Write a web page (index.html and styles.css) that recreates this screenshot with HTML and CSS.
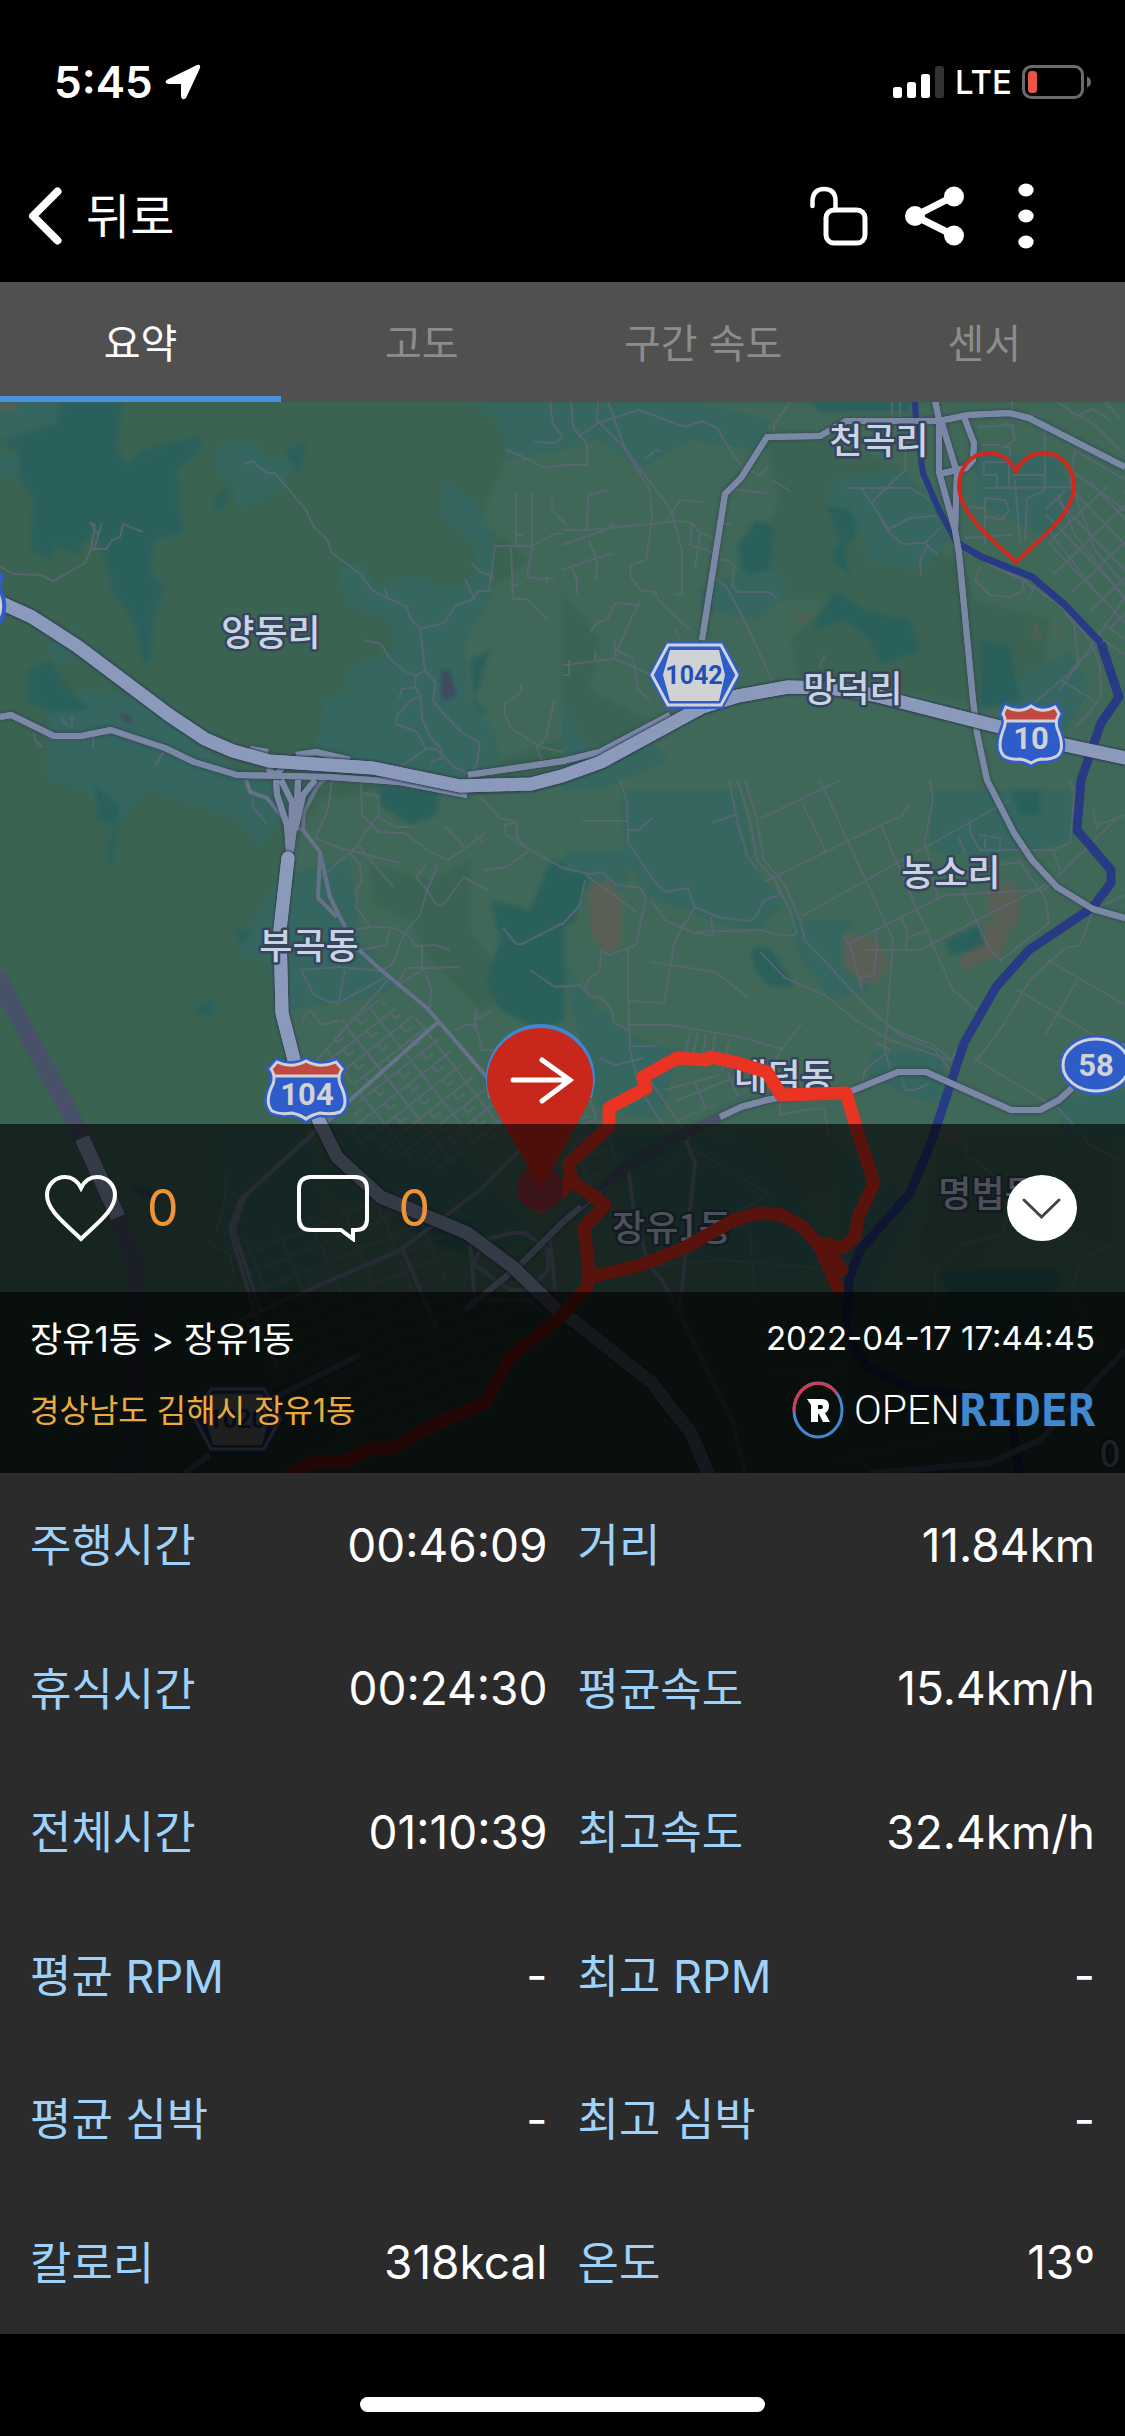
FILE: index.html
```html
<!DOCTYPE html>
<html lang="ko">
<head>
    <meta charset="UTF-8">
    <meta name="viewport" content="width=device-width, initial-scale=1.0">
    <title>OPENRIDER</title>
    <link rel="stylesheet" href="styles.css">
</head>
<body>

    <!-- Status bar -->
    <div class="status-bar">
        <div class="status-left">
            <span class="clock">5:45</span>
            <svg width="36" height="36" viewBox="0 0 36 36" aria-hidden="true">
                <path d="M2.5 15.500 L32 1 Q36 0 35 4 L21.5 33 Q20 36 17.5 35 Q16 34 16 32 V20 H4 Q1 20 0.5 18 Q0.5 16.5 2.5 15.5Z" fill="#fff"/>
            </svg>
        </div>
        <div class="status-right">
            <svg width="52" height="34" viewBox="0 0 52 34" aria-hidden="true">
                <rect x="0" y="22" width="9" height="11" rx="2.5" fill="#fff"/>
                <rect x="14" y="17" width="9" height="16" rx="2.5" fill="#fff"/>
                <rect x="28" y="9" width="9" height="24" rx="2.5" fill="#fff"/>
                <rect x="42" y="1" width="9" height="32" rx="2.5" fill="#333"/>
            </svg>
            <span class="network">LTE</span>
            <svg width="70" height="34" viewBox="0 0 70 34" aria-hidden="true">
                <rect x="1.5" y="1.5" width="59" height="31" rx="8" fill="none" stroke="#6b6b6b" stroke-width="3"/>
                <rect x="6" y="6" width="9" height="22" rx="3.5" fill="#ec5545"/>
                <path d="M65 11.5 Q69 13 69 17 T65 22.5Z" fill="#6b6b6b"/>
            </svg>
        </div>
    </div>

    <!-- Header -->
    <header class="header">
        <button class="back-button" type="button">
            <svg width="34" height="58" viewBox="0 0 34 58" aria-hidden="true">
                <path d="M29.5 4.5 L5 29 L29.5 53.5" fill="none" stroke="#fff" stroke-width="8" stroke-linecap="round" stroke-linejoin="round"/>
            </svg>
            <span>뒤로</span>
        </button>
        <div class="header-actions">
            <button type="button" aria-label="잠금 해제">
                <svg width="58" height="60" viewBox="0 0 58 60">
                    <path d="M2.5 20 V15 Q3 3 14 3 Q25.5 3 25.5 15 V24" fill="none" stroke="#fff" stroke-width="4.5" stroke-linecap="round"/>
                    <rect x="16" y="24" width="39" height="33" rx="8" fill="none" stroke="#fff" stroke-width="5"/>
                </svg>
            </button>
            <button type="button" aria-label="공유">
                <svg width="60" height="60" viewBox="0 0 60 60">
                    <path d="M49 10 L10 30 L49 49.5" fill="none" stroke="#fff" stroke-width="7"/>
                    <circle cx="49" cy="10.5" r="10" fill="#fff"/>
                    <circle cx="10" cy="30" r="10" fill="#fff"/>
                    <circle cx="49" cy="49.5" r="10" fill="#fff"/>
                </svg>
            </button>
            <button type="button" aria-label="더보기">
                <svg width="16" height="66" viewBox="0 0 16 66">
                    <ellipse cx="8" cy="7" rx="7.7" ry="6.5" fill="#fff"/>
                    <ellipse cx="8" cy="33" rx="7.7" ry="6.5" fill="#fff"/>
                    <ellipse cx="8" cy="59" rx="7.7" ry="6.5" fill="#fff"/>
                </svg>
            </button>
        </div>
    </header>

    <!-- Tabs -->
    <nav class="tabs">
        <button class="tab active" type="button">요약</button>
        <button class="tab" type="button">고도</button>
        <button class="tab" type="button">구간 속도</button>
        <button class="tab" type="button">센서</button>
    </nav>

    <!-- Map with the ride on it -->
    <section class="map-section">
        <svg class="map" viewBox="0 402 1125 1071" role="img" aria-label="주행 경로 지도">
            <defs>
                <filter id="soft" x="-5%" y="-5%" width="110%" height="110%"><feGaussianBlur stdDeviation="2"/></filter>
                <pattern id="blocks-east" width="26" height="18" patternUnits="userSpaceOnUse" patternTransform="rotate(46)">
                    <path d="M0 1H26M1 0V18" class="street"/>
                </pattern>
                <pattern id="blocks-west" width="30" height="17" patternUnits="userSpaceOnUse" patternTransform="rotate(-38)">
                    <path d="M0 1H30M1 0V17M14 1V9H22" class="street"/>
                </pattern>
                <pattern id="blocks-south" width="34" height="19" patternUnits="userSpaceOnUse" patternTransform="rotate(-22)">
                    <path d="M0 1H34M1 0V19" class="street"/>
                </pattern>
            </defs>

            <!-- land cover -->
            <rect x="0" y="402" width="1125" height="1071" fill="#3a6352"/>
            <g filter="url(#soft)">
                <path class="plain" d="M530 402H1130V1480H300L310 1180 300 1060 285 1010 300 960 290 850 320 800 380 790 470 795 540 790 600 765 560 740 500 760 440 720 430 650 480 600 530 560 480 520 500 470Z"/>
                <path class="hill" d="M765 437 830 440 905 470 900 540 960 560 975 600 1010 610 1050 620 1040 700 1000 710 900 690 800 680 790 640 830 600 770 600 750 560 780 500Z"/>
                <path class="hill" d="M562 590 600 640 590 690 650 720 600 760 562 740Z"/>
                <path class="hill" d="M370 865 430 880 470 860 470 930 520 1000 480 1010 430 960 410 920 375 905Z"/>
                <path class="hill" d="M740 1125H830L850 1180 800 1200 740 1180ZM940 1140H1110V1240L1010 1220 960 1290 920 1250Z"/>

                <path class="field" d="M0 402H57V423L0 441ZM0 450 30 460 20 475 0 478Z"/>
                <path class="field" d="M215 447 255 440 268 460 295 455 285 485 262 500 240 510 230 480 215 470Z"/>
                <path class="field" d="M338 565H365L375 585 415 575 450 590 480 570 475 545 440 515 445 480 475 500 495 540 490 600 465 640 470 700 495 730 500 765 460 780 320 770 316 745 325 700 350 690 345 670 395 650 390 620 345 605Z"/>
                <path class="field" d="M470 402H562V450L510 460 500 425Z"/>
                <path class="field" d="M50 705 90 690 150 700 200 745 240 775 300 790 260 850 240 820 180 800 150 790 110 830 85 790 45 780Z"/>
                <path class="field" d="M45 650 75 625 80 650 60 665ZM270 890 300 870 350 860 360 940 400 985 360 1000 290 1010 265 960 235 955Z"/>
                <path class="field" d="M560 402H700L770 420 760 450 690 440 640 470 600 440 562 450Z"/>
                <path class="field" d="M830 480 900 470 935 500 950 540 920 570 870 560 855 520 830 510Z"/>
                <path class="field" d="M975 450 1060 460 1075 500 1050 540 1010 520 975 500ZM700 590 765 560 790 590 760 620 700 610Z"/>
                <path class="field" d="M562 700 590 750 640 730 670 760 600 790 562 790ZM1000 690 1070 650 1090 690 1060 740 1010 730Z"/>
                <path class="field" d="M620 790 740 790 755 870 785 900 760 930 720 925 690 910 650 900 625 860ZM565 850 630 850 625 890 565 890Z"/>
                <path class="field" d="M930 790 1070 790 1075 840 1000 860 930 850ZM790 920 850 920 870 990 830 1000 800 960Z"/>
                <path class="field" d="M562 960 600 1010 640 1040 680 1050 660 1120 600 1110 580 1040ZM870 1050 940 1050 950 1110 870 1080ZM1060 1100 1130 1090V1140H1060Z"/>
                <path class="field" d="M320 1120 450 1140 540 1240 470 1260 420 1210 330 1200ZM600 1130 760 1140 830 1240 800 1280 640 1250Z"/>
                <path class="field" d="M220 1130 310 1130 330 1270 260 1300 220 1250ZM840 1150 920 1200 860 1320 840 1300Z"/>

                <path class="forest" d="M0 442 57 423 60 402H122L117 445 125 462 155 445 203 436 195 455 177 470 183 533 155 540 150 570 165 590 155 610 150 660 143 665 135 625 112 590 105 560 95 530 75 555 55 545 50 560 30 550 33 500 20 480 18 450Z"/>
                <path class="forest" d="M285 452 308 440 303 460 297 475ZM213 500 232 483 225 505 218 515ZM470 660 490 650 475 700 490 715 475 710Z"/>
                <path class="forest" d="M27 670 50 660 70 690 90 710 50 712 28 700ZM95 785 120 805 115 845 112 870 105 855 115 825 97 820Z"/>
                <path class="forest" d="M380 785 440 785 437 815 410 825 380 805ZM490 900 530 910 550 860 565 860V1020L540 1030 500 1010 485 980 500 940Z"/>
                <path class="forest" d="M825 505 850 510 857 530 845 550 850 575 830 560 840 540ZM738 545 755 520 775 525 770 570 750 575 740 570ZM835 590 865 610 910 620 920 650 880 665 870 640 845 620 810 630Z"/>
                <path class="forest" d="M980 640 1010 645 1020 700 980 710ZM810 402H910V412H820ZM1010 790 1040 790 1040 815 1020 815Z"/>
                <path class="forest" d="M562 870 590 875 575 920 562 930ZM752 950Q765 940 775 955L795 985Q790 990 768 985 750 970 752 950Z"/>
                <path class="forest" d="M945 940 980 925 985 950 950 955ZM390 1220 470 1220 490 1250 450 1250ZM940 1270H1060L1050 1340 960 1340Z"/>
                <path class="forest" d="M195 1005 215 1000 212 1015 198 1015ZM235 930 255 930 240 945Z"/>

                <path class="soil" d="M590 885 610 880 622 900 620 945 605 952 590 930ZM844 932 875 940 890 965 880 980 862 985 844 965ZM988 890 1010 882 1018 890 1018 925 1000 930 988 910ZM985 920 1010 930 1000 955 962 970 962 955 985 945Z"/>
                <path class="soil" d="M792 613 810 615 805 623ZM1035 618 1040 640 1034 638ZM1053 622 1060 628 1053 632ZM0 404 18 404 15 410 0 412ZM940 1130 960 1130 955 1145 940 1145Z"/>
                <path fill="#414a60" d="M441 671 449 670 456 690V697L442 700ZM119 715 129 714 133 722 130 725ZM126 1180 150 1190 165 1200 140 1197Z"/>
            </g>

            <!-- city blocks -->
            <path fill="url(#blocks-east)" d="M1045 505 1080 480 1125 490V640L1090 610 1050 570Z"/>
            <path fill="url(#blocks-west)" d="M378 1000 420 1020 478 1080 520 1130 440 1170 350 1140 360 1085 312 1070 340 1030Z"/>
            <path fill="url(#blocks-south)" d="M240 1240 400 1190 450 1240 440 1330 270 1390ZM570 1110 600 1120 620 1160 575 1200ZM670 1090 740 1070 740 1095 680 1120ZM330 1350 420 1300 540 1290 470 1400 400 1440 330 1460Z"/>

            <!-- small streets -->
            <g class="street">
                <path d="M0 566 13 574 41 575 53 581 85 563 91 549 106 549 112 540 120 537 123 524 143 532M91 549 95 525 90 522 98 535 102 523 94 549"/>
                <path d="M245 464 252 461 267 473H275L306 510 314 527 327 539 332 553 360 574 373 591 407 607 410 618 420 629 444 623 456 605 474 599 478 591H489L495 546H532L554 534 563 533M385 588 387 597M474 599 465 579M472 563 480 572 494 577M516 493V546M532 493V546L527 577 541 579 554 578M511 546 513 599 527 599 547 620M511 585H519M516 535H523M547 577V585"/>
                <path d="M420 629 425 670 436 683 433 700 440 710 461 732 480 743 477 765 468 775M425 670 416 676 415 687 421 697 422 718 431 738 441 748 442 755 454 767 468 774M364 640 381 644 391 660 406 672 416 676M415 687 402 689 399 698M421 697 411 700 397 716 396 724 417 732 426 749 400 767M426 749 436 749 444 757 430 763"/>
                <path d="M505 449 546 468 563 465M550 402 553 424 563 437 555 443 534 442M522 453 524 461M552 498V509L563 522M521 683V692L505 704V714L511 728 540 747 563 752M554 700 546 738 537 748 542 760"/>
                <path d="M34 732 35 740 43 748M93 735V749M166 748 155 766M61 718 68 726M72 716V728M56 740H80"/>
                <path d="M571 402 573 427 587 444V465L562 465M598 402 597 420 623 446 650 490 652 520 646 560 631 565 630 575 640 590 655 592 660 602 690 630M578 437 600 422 639 410 685 427 702 421 717 428 730 450 745 470M608 402 625 448 671 510 682 550V595L675 594M645 460 655 450 662 451M562 530 590 530 680 521 692 523 700 533 722 540M562 545 605 530 615 523M562 520 572 532M587 530 588 495 609 490M665 523 680 500 702 502M692 523 690 545 722 555M700 533 695 568M562 570 590 560 612 554M589 540 597 562 596 580M572 568 577 580V594"/>
                <path d="M712 575 727 588 746 624 772 680M712 559 727 560 734 566 732 585 738 592H769L777 598M772 480 790 491M730 489 767 493M745 468 760 475 768 466M773 437 774 425 790 402M715 524H731M640 605 615 603 607 620 597 622 590 633M640 600 617 650 633 659 638 690 650 700M562 665 615 659 650 674M595 650V659M614 640 616 658M675 630 680 640M562 675H569V660"/>
                <path d="M907 430 905 470 872 502 887 530 902 544 925 543 940 528M846 488 910 488 930 500M887 530 910 518 935 516M928 545 920 560 921 575M925 543 938 555M862 489 888 528M892 402V420H900V402M825 655 820 665 821 668"/>
                <path d="M980 567 975 580 990 595 1010 597 1024 590 1022 580 985 562M1023 578 1033 590 1028 600M1060 605 1074 624 1079 666 1061 680 1034 703M961 550 1000 565 1060 605 1090 640 1100 665 1101 695 1090 712 1075 727M1061 680 1098 703M982 488 1078 487M984 462H1009V486M984 462V475H997V488M985 498 1005 500 1009 510 1002 520 985 516ZM965 538 1012 535M1015 480 1020 545M1025 500 1045 490V430M1012 475H1045V488M1027 498 1025 540M978 427 1012 425 1015 440 1003 447H1010V456H1004M983 445H1000M985 500V545M965 507 985 508M1032 545 1048 530 1095 590M1058 494 1075 535 1125 600M1075 450 1070 480 1095 550 1125 585M1075 450 1125 480M1070 470 1125 510M1079 415 1095 425 1125 455M1058 402 1077 416 1092 409 1110 420M1012 402V412L1037 415M1105 402 1120 418"/>
                <path d="M1130 590 1060 690M1070 670 1103 640 1125 655M1103 622 1125 640"/>
                <path d="M620 780 627 803 628 842 657 885 667 892 688 888 695 907 718 917 750 921 757 915 764 900 780 895M695 907 675 940 664 1003 629 1001M582 821H627M628 830H638L653 818M562 868 590 874 602 872 617 885 640 888 646 897 636 945 628 950V985L630 1050 640 1090M586 875 638 913M636 945 610 955 601 951 600 970 588 980 585 990M562 987 580 985 590 996 602 998 612 1010 614 1023 628 1030M562 925 580 905 585 880M652 901 665 920 692 932 760 930 782 936 795 935M651 962 715 972 748 997M692 932 713 936M711 917 713 935M712 823 735 815"/>
                <path d="M729 780 737 820 747 855 757 870M737 780 750 820 757 860 775 880 790 910 797 935M745 780 757 820 764 860 785 885 800 920 805 940 870 1010 900 1035 935 1050 953 1074M757 820 841 780M764 882 881 825 901 817 910 803M802 916 1010 800M802 802 826 852M820 780 893 940 885 1050 893 1080M881 825 915 905 953 990 980 1013 951 1060 933 1045 895 1030 860 1000M962 890 990 950 1001 960 1049 923 1046 900 1020 862 960 870M850 943 945 895 1044 890 1120 815M866 950H920L1045 885M780 895 777 887 790 910M760 952 785 978 825 995 855 1020 890 1040 950 1060M844 937 850 945 862 990M875 930 877 945 874 975 860 978M900 915 907 930 906 950M908 937 930 930M930 780 933 800 925 842 938 900M970 820V832L980 850H1053L1070 843 1075 790 1068 780M978 835 1000 838V850M985 838V848M1053 850 1060 870M958 837 965 853"/>
                <path d="M1125 895 1093 910 1080 945 1065 948 1030 980 1000 1030 973 1065M1048 960 1125 1005M1016 989 1110 1045M1078 979 1045 1035M1098 825 1125 815M1093 808 1097 830M973 1058 1060 1110 1074 1125M875 1042 890 1050 865 1070 862 1085 900 1075M953 1074 945 1100M900 1072 905 1090H915L930 1083"/>
                <path d="M630 1025H671L740 1037 782 1049 802 1023M690 1033 685 1055M698 1033 693 1053M706 1034 703 1055M715 1035 712 1056M729 1041 722 1070M782 1049 775 1060M600 1058 615 1065 644 1058M632 1046 657 1046M780 1100V1115L805 1110 824 1108 830 1140M664 1090 720 1075M590 1100 600 1130M640 1090 670 1135M650 1080 690 1140"/>
                <path d="M253 798 252 806 266 823M332 780 328 810 315 838 340 848 400 863M361 780 362 815 379 832 405 833 430 852 448 860 470 845 485 833M363 793 378 796 379 815M379 817 395 827H414M379 815 365 832 358 845 318 880M358 845 393 887M350 853 360 865 362 880 355 892 358 905M445 826 464 847M475 835 483 842M480 797 500 818 517 822V838L530 850 507 867 484 870M517 822 505 825 506 835 530 850 563 868M426 865 416 877 427 890 420 915 405 932 392 965 380 971 340 967 301 970 314 995 330 1002 342 1001 390 975M427 890 437 905 442 906 464 877 488 890M438 865 427 890M405 932 416 946 435 945 450 950M422 946V970L398 985 405 968 430 968 460 967M425 970 431 990 430 1008M345 970 338 1005M340 932 370 927 395 928 405 934M355 905 370 927M360 950 386 945 390 930M503 928 516 944H522L563 923M530 970 555 987 563 986M455 1030 465 1025H476L482 1050 495 1050M476 1010 474 1030M490 1012 475 1020M388 980 317 1060 312 1090M302 1020 310 1010 322 1025 340 1020M342 1020 373 1060 420 1120"/>
                <path d="M226 1175 225 1200 215 1235M206 1240 230 1255 234 1275 225 1285M568 1130 595 1120M662 1170 695 1150 770 1195 720 1220M750 1230 755 1300M600 1270 720 1260 820 1268M1110 1245 1080 1260 1072 1290 1100 1350M965 1140 967 1155 1000 1180M960 1245 1000 1235 1010 1210M935 1310V1270L960 1245M1077 1130 1090 1145 1120 1160M770 1375 846 1368M835 1460 980 1430"/>
            </g>

            <!-- rivers -->
            <g class="river">
                <path d="M915 400 916 420 923 473 939 510 957 543" stroke-width="6"/>
                <path d="M957 543 982 557 1032 577 1065 605 1101 643" stroke-width="7"/>
                <path d="M1101 643 1119 697 1101 723 1081 780 1077 830 1111 870V883L1093 907 1029 950 996 987 964 1043 932 1140 910 1193 860 1250 849 1280 846 1333 867 1367 914 1390 993 1397 1011 1420 1020 1473" stroke-width="9"/>
            </g>

            <!-- local roads -->
            <g class="local">
                <path d="M246 780 250 792 267 798 287 823 303 830 320 852 330 897 345 927 359 950 381 970 427 1008 485 1075 520 1120"/>
                <path d="M303 830 304 812 318 785 330 775M320 852 318 898 337 917M438 1022 348 1102 318 1130 240 1200 230 1230 260 1330 280 1370M330 1117 244 1197 234 1230 260 1310"/>
                <path d="M240 1320 400 1250 480 1190 530 1140M403 1250 437 1330M470 1245 475 1300M470 1300 560 1300M475 1260 485 1240 510 1233H525L548 1250V1270L530 1290H510L475 1265ZM550 1240 555 1290"/>
                <path d="M686 1140 695 1163 680 1307M628 1167 634 1213 648 1263 662 1280 677 1307 732 1420 745 1473"/>
            </g>

            <!-- main roads -->
            <g class="road-edge"><use href="#main-roads"/></g>
            <g class="road" id="main-roads">
                <path d="M0 717 11 715 54 736H81L111 730 165 748 194 762 237 775 330 777 400 782 467 795"/>
                <path d="M296 755 316 752 350 760M468 775 563 761 600 752 670 715M250 749 268 752"/>
                <path d="M702 640 725 494 741 478 767 437 820 436 846 421H939L968 415 1009 413 1029 418 1125 467"/>
                <path d="M935 400 939 420V472L955 530 959 553 973 700 977 733 987 780 1014 833 1032 860 1057 887 1093 909 1125 918"/>
                <path d="M941 420 957 473 955 530M964 417 974 443 973 460 966 468 939 474"/>
                <path d="M276 780 277 795 287 825 289 852M281 780 292 802 291 852M298 780 297 805 291 850M315 780 303 795 295 830M268 768 275 776 282 768"/>
                <path d="M1072 1088 1059 1100 1040 1110H1011L926 1072H898L849 1092 777 1098 767 1100 741 1107 720 1117 670 1140 627 1167 562 1223 520 1265 465 1310M360 1355 270 1400M210 1455 185 1473M1125 1045 1110 1060M1125 1350 1040 1440 990 1463 870 1473"/>
            </g>
            <path d="M720 1117 670 1140 627 1167 580 1205" fill="none" stroke="#475168" stroke-width="7"/>

            <!-- expressways -->
            <path d="M-4 975 84 1140 118 1217 135 1263 138 1307 133 1400 127 1473" fill="none" stroke="#475168" stroke-width="18"/>
            <path d="M82 1138 118 1217" fill="none" stroke="#8b99bb" stroke-width="15"/>
            <g class="highway-edge"><use href="#highways"/></g>
            <g class="highway" id="highways">
                <path d="M-5 600 32 617 77 646 169 715 205 739 233 751 269 761 373 768 460 786 531 784 562 776 601 762 702 707 738 696 788 687 831 688 874 695 1000 727 1065 745 1130 759"/>
                <path d="M288 858 280 930 282 1013 294 1060 320 1123 337 1157 381 1197 467 1233 513 1267 557 1310 573 1320 652 1383 691 1433 711 1480"/>
            </g>

            <!-- place names -->
            <g class="place">
                <text x="271" y="646">양동리</text>
                <text x="879" y="454">천곡리</text>
                <text x="853" y="702">망덕리</text>
                <text x="951" y="886">농소리</text>
                <text x="309" y="959">부곡동</text>
                <text x="784" y="1090">대덕동</text>
                <text x="672" y="1241">장유1동</text>
                <text x="988" y="1207">명법동</text>
                <text x="1110" y="1467">0</text>
            </g>

            <!-- route signs -->
            <g id="hexagon">
                <path d="M667 641H723L741 675 723 709H667L648 675Z" fill="#2e5cc9"/>
                <path d="M668 645H721L737 675 721 705H668L652 675Z" fill="#2e5cc9" stroke="#d0d2d6" stroke-width="3"/>
                <path d="M670 650H719L725 675 719 701H670L663 675Z" fill="#d0d2d6"/>
            </g>
            <text class="sign sign-blue" x="694" y="684">1042</text>
            <use href="#hexagon" x="-457" y="744"/>
            <text class="sign sign-blue" x="237" y="1428">1020</text>
            <path d="M-20 575H2L-1 588Q9 605 0 622H-20Z" fill="#d0d2d6" stroke="#2e5cc9" stroke-width="4"/>

            <g>
                <path d="M1006 707Q1020 714 1031 706 1042 714 1055 707L1059 714Q1055 720 1057 728 1066 749 1057 756 1050 760 1041 759 1036 760 1031 763 1026 760 1020 759 1010 760 1004 756 996 748 1004 728 1007 720 1003 714Z" fill="#2e5cc9" stroke="#2e5cc9" stroke-width="8"/>
                <path d="M1006 707Q1020 714 1031 706 1042 714 1055 707L1059 714Q1055 719 1056 722H1006Q1007 719 1003 714Z" fill="#c04a42"/>
                <path d="M1006 707Q1020 714 1031 706 1042 714 1055 707L1059 714Q1055 720 1057 728 1066 749 1057 756 1050 760 1041 759 1036 760 1031 763 1026 760 1020 759 1010 760 1004 756 996 748 1004 728 1007 720 1003 714ZM1005 721H1057" fill="none" stroke="#d0d2d6" stroke-width="3"/>
                <text class="sign" x="1031" y="749">10</text>
            </g>
            <g>
                <path d="M277 1062Q292 1069 306 1061 320 1069 336 1062L342 1069Q337 1076 340 1084 350 1104 340 1112 332 1115 320 1113 311 1115 306 1119 301 1115 292 1113 280 1115 272 1111 264 1102 273 1084 276 1076 271 1069Z" fill="#2e5cc9" stroke="#2e5cc9" stroke-width="8"/>
                <path d="M277 1062Q292 1069 306 1061 320 1069 336 1062L342 1069Q338 1073 339 1076H274Q275 1073 271 1069Z" fill="#c04a42"/>
                <path d="M277 1062Q292 1069 306 1061 320 1069 336 1062L342 1069Q337 1076 340 1084 350 1104 340 1112 332 1115 320 1113 311 1115 306 1119 301 1115 292 1113 280 1115 272 1111 264 1102 273 1084 276 1076 271 1069ZM274 1076H339" fill="none" stroke="#d0d2d6" stroke-width="3"/>
                <text class="sign" x="307" y="1105">104</text>
            </g>
            <g>
                <ellipse cx="1096" cy="1065" rx="37" ry="30" fill="#2e5cc9"/>
                <ellipse cx="1096" cy="1065" rx="33" ry="26" fill="none" stroke="#d0d2d6" stroke-width="3"/>
                <text class="sign" x="1096" y="1076">58</text>
            </g>

            <!-- ridden track -->
            <path d="M541 1214Q530 1206 518 1190H564Q554 1206 541 1214Z" fill="#e93323"/>
            <path class="track" d="M562 1192 571 1180 605 1205 584 1228 589 1270 587 1287 557 1320 510 1357 485 1403 445 1420 417 1433 395 1448H370L345 1462H312L288 1476M587 1278 641 1265 684 1248 734 1220 759 1213 781 1215 803 1227 820 1247 838 1288M824 1245 842 1270M822 1243 842 1248 855 1237 858 1217 874 1183 858 1133 846 1093 781 1095 767 1072 734 1062 710 1057 707 1060 677 1058 643 1077 646 1088 609 1108V1127L569 1163 571 1180"/>
            <circle cx="540" cy="1188" r="23" fill="#9c3644"/>

            <!-- finish pin -->
            <path d="M540 1024A55 55 0 0 1 595 1081L592 1098H488L486 1081A55 55 0 0 1 540 1024Z" fill="#3f87d0"/>
            <path d="M540 1028A53 53 0 0 1 593 1081Q593 1094 586 1107L541 1190 494 1107Q487 1094 487 1081A53 53 0 0 1 540 1028Z" fill="#c8281c"/>
            <path d="M513 1080H570M542 1060 570 1080 542 1101" fill="none" stroke="#fff" stroke-width="5" stroke-linecap="round" stroke-linejoin="miter"/>

            <!-- favourite -->
            <path d="M1016 471C1009 458 999 453 988 453 971 453 959 468 959 486 959 514 994 541 1016 562 1038 541 1074 514 1074 486 1074 468 1061 453 1044 453 1033 453 1023 458 1016 471Z" fill="none" stroke="#d0281d" stroke-width="4"/>
        </svg>

        <div class="map-overlay">
            <div class="reactions">
                <button class="reaction" type="button" aria-label="좋아요 0">
                    <svg width="72" height="68" viewBox="0 0 72 68">
                        <path d="M36 14C32 6 26 3 20 3 10 3 2 11 2 21 2 37 22 51 36 65 50 51 70 37 70 21 70 11 62 3 52 3 46 3 40 6 36 14Z" fill="none" stroke="#fff" stroke-width="4"/>
                    </svg>
                    <span>0</span>
                </button>
                <button class="reaction" type="button" aria-label="댓글 0">
                    <svg width="72" height="68" viewBox="0 0 72 68">
                        <path d="M14 3H58Q70 3 70 15V45Q70 56 59 56H56V65L44 56H14Q2 56 2 44V15Q2 3 14 3Z" fill="none" stroke="#fff" stroke-width="4"/>
                    </svg>
                    <span>0</span>
                </button>
                <button class="collapse-button" type="button" aria-label="접기">
                    <svg width="72" height="66" viewBox="0 0 72 66">
                        <ellipse cx="36" cy="33" rx="35" ry="33" fill="#fff"/>
                        <path d="M18 25 35.5 42 53 25" fill="none" stroke="#444" stroke-width="3" stroke-linecap="round"/>
                    </svg>
                </button>
            </div>
            <div class="ride-info">
                <div class="ride-row">
                    <h1 class="ride-title">장유1동 &gt; 장유1동</h1>
                    <time class="ride-date" datetime="2022-04-17T17:44:45">2022-04-17 17:44:45</time>
                </div>
                <div class="ride-row">
                    <p class="ride-place">경상남도 김해시 장유1동</p>
                    <div class="logo">
                        <svg width="52" height="58" viewBox="0 0 52 58" aria-hidden="true">
                            <ellipse cx="26" cy="29" rx="24" ry="27" fill="none" stroke="#4288cf" stroke-width="3"/>
                            <path d="M2 30A24 27 0 0 1 45 13" fill="none" stroke="#d43b52" stroke-width="3"/>
                            <path d="M15 18H30Q37 18 37 25 37 30 33 32L38 41H31L27 33H26V41H19V24ZM26 24V28H29Q31 28 31 26T29 24Z" fill="#fff" fill-rule="evenodd"/>
                        </svg>
                        <span class="logo-open">OPEN</span><span class="logo-rider">RIDER</span>
                    </div>
                </div>
            </div>
        </div>
    </section>

    <!-- Ride numbers -->
    <dl class="stats">
        <div class="stat"><dt>주행시간</dt><dd>00:46:09</dd></div>
        <div class="stat"><dt>거리</dt><dd>11.84km</dd></div>
        <div class="stat"><dt>휴식시간</dt><dd>00:24:30</dd></div>
        <div class="stat"><dt>평균속도</dt><dd>15.4km/h</dd></div>
        <div class="stat"><dt>전체시간</dt><dd>01:10:39</dd></div>
        <div class="stat"><dt>최고속도</dt><dd>32.4km/h</dd></div>
        <div class="stat"><dt>평균 RPM</dt><dd>-</dd></div>
        <div class="stat"><dt>최고 RPM</dt><dd>-</dd></div>
        <div class="stat"><dt>평균 심박</dt><dd>-</dd></div>
        <div class="stat"><dt>최고 심박</dt><dd>-</dd></div>
        <div class="stat"><dt>칼로리</dt><dd>318kcal</dd></div>
        <div class="stat"><dt>온도</dt><dd>13º</dd></div>
    </dl>

    <div class="home-area">
        <div class="home-indicator"></div>
    </div>

</body>
</html>
```

FILE: styles.css
```css
* {
    box-sizing: border-box;
}

body {
    margin: 0;
    min-height: 100vh;
    display: flex;
    flex-direction: column;
    background-color: #000;
    color: #fff;
    font-family: Inter, 'Noto Sans CJK KR', sans-serif;
}

button {
    padding: 0;
    border: none;
    background: none;
    color: inherit;
    font-family: inherit;
    cursor: pointer;
}

svg {
    display: block;
}

/* status bar */
.status-bar {
    display: flex;
    justify-content: space-between;
    align-items: center;
    height: 132px;
    padding: 32px 33px 0 54px;
}

.status-left,
.status-right {
    display: flex;
    align-items: center;
    gap: 12px;
}

.status-right {
    gap: 10px;
}

.clock {
    font-size: 44px;
    font-weight: 600;
}

.network {
    font-size: 33px;
    font-weight: 500;
}

/* header */
.header {
    display: flex;
    justify-content: space-between;
    align-items: center;
    height: 150px;
    padding: 18px 91px 0 28px;
}

.back-button {
    display: flex;
    align-items: center;
    gap: 24px;
    font-size: 48px;
    font-weight: 400;
}

.back-button span {
    padding-bottom: 6px;
}

.header-actions {
    display: flex;
    align-items: center;
    gap: 37px;
}

.header-actions button:last-child {
    margin-left: 16px;
}

/* tabs */
.tabs {
    display: grid;
    grid-template-columns: repeat(4, 1fr);
    height: 120px;
    background-color: #505050;
}

.tab {
    border-top: 3px solid transparent;
    border-bottom: 6px solid transparent;
    color: #8c8c8c;
    font-size: 40px;
}

.tab.active {
    border-bottom-color: #4793dd;
    color: #fff;
}

/* map */
.map-section {
    position: relative;
    overflow: hidden;
}

.map {
    width: 100%;
    height: auto;
}

.plain {
    fill: #416758;
}

.hill {
    fill: #3a6352;
}

.field {
    fill: #34665f;
}

.forest {
    fill: #2a605c;
}

.soil {
    fill: #5a5f54;
}

.street {
    fill: none;
    stroke: #5c6777;
    stroke-width: 2;
    stroke-opacity: 0.8;
}

.river {
    fill: none;
    stroke: #283a84;
    stroke-linejoin: round;
}

.local {
    fill: none;
    stroke: #66718a;
    stroke-width: 4;
    stroke-linejoin: round;
}

.road {
    fill: none;
    stroke: #7b88a5;
    stroke-width: 6;
    stroke-linejoin: round;
}

.highway {
    fill: none;
    stroke: #8b99bb;
    stroke-width: 13;
    stroke-linejoin: round;
    stroke-linecap: round;
}

.highway-edge {
    filter: drop-shadow(0 1px 1px #2f3b52) drop-shadow(0 -1px 1px #2f3b52);
}

.road-edge {
    filter: drop-shadow(0 0 2px #2f3b52);
}

.place {
    fill: #c9d3e6;
    stroke: #36455a;
    stroke-width: 5px;
    stroke-linejoin: round;
    paint-order: stroke;
    font-family: 'Noto Sans CJK KR', sans-serif;
    font-size: 36px;
    font-weight: 500;
    text-anchor: middle;
}

.sign {
    fill: #d0d2d6;
    font-family: Roboto, sans-serif;
    font-size: 31px;
    font-weight: 700;
    text-anchor: middle;
}

.sign-blue {
    fill: #2450b5;
    font-size: 25px;
}

.track {
    fill: none;
    stroke: #e93323;
    stroke-width: 13;
    stroke-linejoin: round;
    stroke-linecap: round;
}

/* panels lying over the lower part of the map */
.map-overlay {
    position: absolute;
    left: 0;
    right: 0;
    bottom: 0;
}

.reactions {
    display: flex;
    align-items: center;
    gap: 118px;
    height: 168px;
    padding: 0 47px 0 45px;
    background-color: rgba(0, 0, 0, 0.62);
}

.reaction {
    display: flex;
    align-items: center;
    gap: 30px;
    color: #ef9436;
    font-size: 50px;
}

.collapse-button {
    margin-left: auto;
}

.ride-info {
    display: flex;
    flex-direction: column;
    gap: 12px;
    height: 181px;
    padding: 16px 30px;
    background-color: rgba(0, 0, 0, 0.85);
}

.ride-row {
    display: flex;
    justify-content: space-between;
    align-items: center;
    height: 60px;
}

.ride-title {
    margin: 0;
    padding-bottom: 4px;
    font-size: 35px;
    font-weight: 400;
}

.ride-date {
    font-size: 33px;
}

.ride-place {
    margin: 0;
    padding-bottom: 4px;
    color: #edaa3c;
    font-size: 32px;
}

.logo {
    display: flex;
    align-items: center;
}

.logo-open {
    margin-left: 10px;
    font-family: Roboto, sans-serif;
    font-size: 41px;
    font-weight: 300;
}

.logo-rider {
    color: #4288cf;
    font-family: 'DejaVu Sans Mono', monospace;
    font-size: 45px;
    font-weight: 700;
}

/* ride numbers */
.stats {
    flex: 1;
    display: grid;
    grid-template-columns: 1fr 1fr;
    grid-auto-rows: 1fr;
    column-gap: 30px;
    margin: 0;
    padding: 0 30px;
    background-color: #2b2b2b;
}

.stat {
    display: flex;
    justify-content: space-between;
    align-items: center;
    min-height: 96px;
}

.stat dt {
    padding-bottom: 4px;
    color: #9fd2fb;
    font-size: 45px;
}

.stat dd {
    margin: 0;
    font-size: 46px;
}

/* home indicator */
.home-area {
    display: flex;
    justify-content: center;
    align-items: flex-end;
    height: 102px;
    padding-bottom: 24px;
}

.home-indicator {
    width: 36%;
    height: 15px;
    border-radius: 8px;
    background-color: #fff;
}
```
